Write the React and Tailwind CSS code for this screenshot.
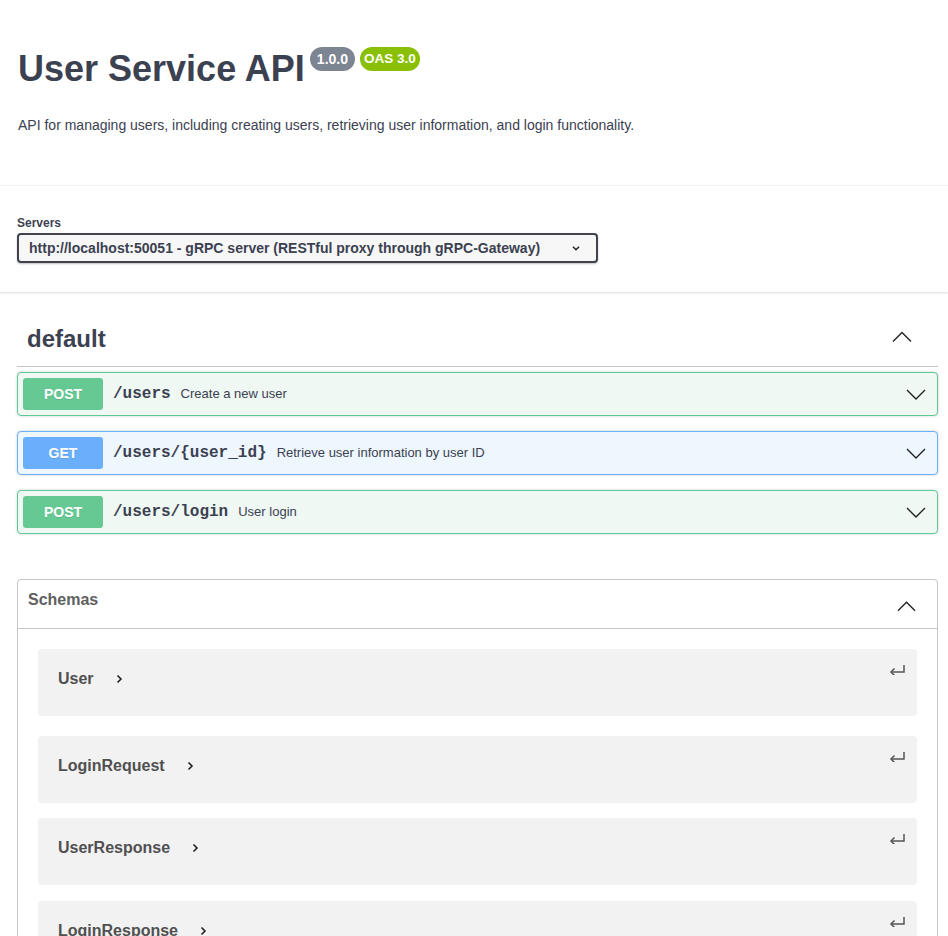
import React from 'react';

const sans = { fontFamily: '"Liberation Sans", Arial, sans-serif' };

const Chevron = ({ dir = 'down', className = '' }) => {
  const d = {
    down: 'M1 6 L10 15 L19 6',
    up: 'M1 14.5 L10 5.5 L19 14.5',
  }[dir];
  return (
    <svg viewBox="0 0 20 20" className={className} fill="none" stroke="currentColor" strokeWidth="1.4">
      <path d={d} />
    </svg>
  );
};

const ops = [
  { method: 'POST', path: '/users', desc: 'Create a new user' },
  { method: 'GET', path: '/users/{user_id}', desc: 'Retrieve user information by user ID' },
  { method: 'POST', path: '/users/login', desc: 'User login' },
];

const models = [
  { name: 'User', mb: 'mb-[20px]' },
  { name: 'LoginRequest', mb: 'mb-[15px]' },
  { name: 'UserResponse', mb: 'mb-[16px]' },
  { name: 'LoginResponse', mb: 'mb-[16px]' },
];

const OpBlock = ({ method, path, desc }) => {
  const post = method === 'POST';
  return (
    <div
      className={`mb-[15px] h-[44px] rounded-[4px] border flex items-center p-[5px] shadow-[0_0_3px_rgba(0,0,0,0.19)] ${
        post ? 'border-[#5fca95] bg-[#eff8f3]' : 'border-[#68b0fb] bg-[#eef6fe]'
      }`}
    >
      <div
        className={`w-[80px] h-[32px] rounded-[3px] flex items-center justify-center text-white font-bold text-[14px] [text-shadow:0_1px_0_rgba(0,0,0,0.1)] ${
          post ? 'bg-[#66c994]' : 'bg-[#6aaffb]'
        }`}
      >
        {method}
      </div>
      <span
        className="px-[10px] text-[16px] font-bold text-[#3b4151]"
        style={{ fontFamily: '"Liberation Mono", "Courier New", monospace' }}
      >
        {path}
      </span>
      <span className="text-[13px] text-[#3b4151]">{desc}</span>
      <Chevron dir="down" className="ml-auto mr-[6px] w-[20px] h-[20px] text-[#222]" />
    </div>
  );
};

export default function App() {
  return (
    <div className="min-h-screen w-full bg-white text-[#3b4151] overflow-hidden" style={sans}>
      {/* info */}
      <div className="px-[18px] pt-[47px] h-[185px]">
        <div className="flex items-start">
          <h2 className="text-[36px] leading-[43px] font-bold text-[#3b4151] m-0">User Service API</h2>
          <span className="ml-[5px] h-[24px] px-[7px] rounded-full bg-[#7d8492] text-white text-[14px] font-bold flex items-center">
            1.0.0
          </span>
          <span className="ml-[5px] h-[24px] px-[4px] rounded-full bg-[#89bf04] text-white text-[13.5px] font-bold flex items-center">
            OAS 3.0
          </span>
        </div>
        <p className="mt-[25px] text-[14px] leading-[20px] text-[#3b4151]">
          API for managing users, including creating users, retrieving user information, and login functionality.
        </p>
      </div>

      {/* servers */}
      <div className="bg-white shadow-[0_1px_2px_0_rgba(0,0,0,0.15)] border-t border-[#f3f3f3] pt-[29px] pb-[29px] px-[17px]">
        <div className="text-[12px] leading-[16px] font-bold text-[#3b4151]">Servers</div>
        <div className="mt-[2px] w-[581px] h-[30px] border-2 border-[#41444e] rounded-[4px] bg-[#f7f7f7] shadow-[0_1px_2px_0_rgba(0,0,0,0.25)] flex items-center pl-[10px] pr-[14px]">
          <span className="text-[14px] font-bold text-[#3b4151]">
            http://localhost:50051 - gRPC server (RESTful proxy through gRPC-Gateway)
          </span>
          <svg viewBox="0 0 20 20" className="ml-auto w-[12px] h-[12px] text-[#222]" fill="none" stroke="currentColor" strokeWidth="2.4">
            <path d="M5 8 L10 13 L15 8" />
          </svg>
        </div>
      </div>

      {/* default tag */}
      <div className="pl-[17px] pr-[10px] pt-[19px]">
        <div className="h-[56px] flex items-center border-b border-[rgba(59,65,81,0.3)] pl-[10px] pr-[26px] mb-[5px]">
          <h3 className="text-[24px] font-bold text-[#3b4151]">default</h3>
          <Chevron dir="up" className="ml-auto w-[20px] h-[20px] -mt-[3px] text-[#222]" />
        </div>
        {ops.map((o) => (
          <OpBlock key={o.path} {...o} />
        ))}

        {/* schemas */}
        <div className="mt-[45px] border border-[rgba(59,65,81,0.3)] rounded-[4px]">
          <div className="h-[49px] flex border-b border-[rgba(59,65,81,0.3)] pl-[10px] pr-[21px]">
            <h4 className="pt-[10px] text-[16px] leading-[20px] font-bold text-[#606060]">Schemas</h4>
            <Chevron dir="up" className="ml-auto self-center w-[19px] h-[19px] mt-[4px] text-[#222]" />
          </div>
          <div className="px-[20px] pt-[20px]">
            {models.map((m) => (
              <div key={m.name} className={`${m.mb} h-[67px] rounded-[4px] bg-[#f2f2f2] flex items-start justify-between pl-[20px] pr-[12px]`}>
                <div className="pt-[20px] flex items-center">
                  <span className="text-[16px] leading-[20px] font-bold text-[#505050]">{m.name}</span>
                  <svg viewBox="0 0 10 10" className="ml-[20px] w-[10px] h-[10px] text-[#222]" fill="none" stroke="currentColor" strokeWidth="1.6">
                    <path d="M3.5 1.5 L7 5 L3.5 8.5" />
                  </svg>
                </div>
                <svg viewBox="0 0 16 11" className="mt-[15px] w-[16px] h-[11px] text-[#555]" fill="none" stroke="currentColor" strokeWidth="1.5">
                  <path d="M2 8 H15 V1" />
                  <path d="M5.5 4.5 L2 8 L5.5 11.5" />
                </svg>
              </div>
            ))}
          </div>
        </div>
      </div>
    </div>
  );
}
